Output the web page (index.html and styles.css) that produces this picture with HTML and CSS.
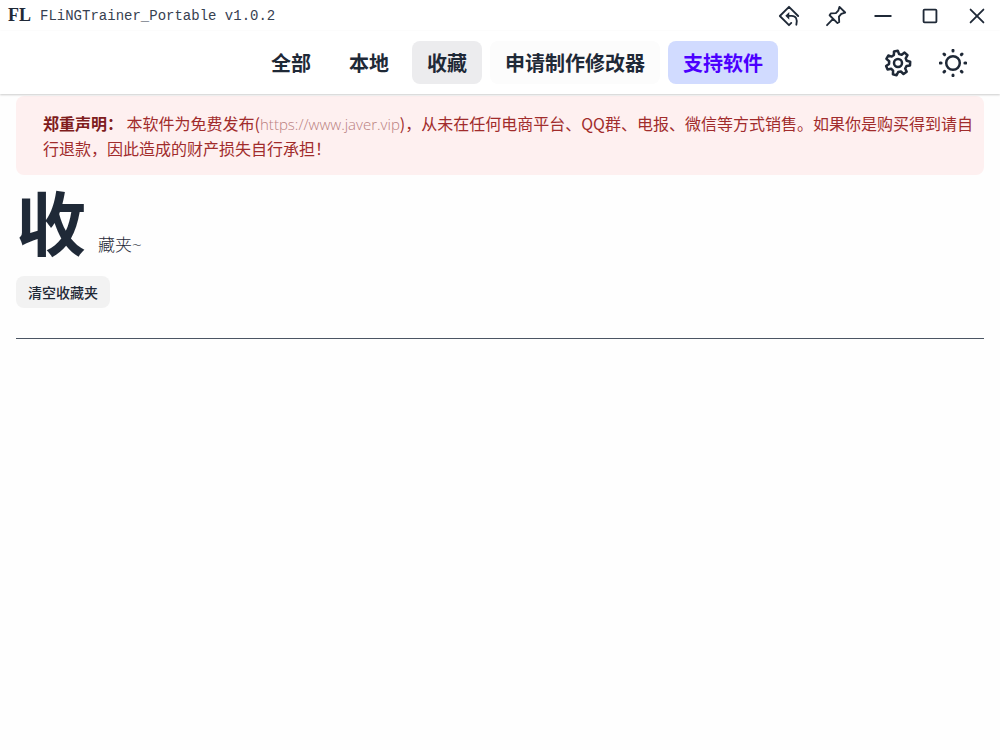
FILE: index.html
```html
<!DOCTYPE html>
<html lang="zh-CN">
<head>
    <meta charset="UTF-8">
    <title>FLiNGTrainer_Portable</title>
    <link rel="stylesheet" href="styles.css">
</head>
<body>
    <header class="titlebar">
        <span class="logo">FL</span>
        <span class="app-name">FLiNGTrainer_Portable v1.0.2</span>
        <div class="window-buttons">
            <button type="button" aria-label="返回">
                <svg viewBox="0 0 24 24"><path d="M22 12 12 2 2 12l10 10 2.500-2.500M11 11.800h4c4.500 0 6.500 3.500 5 9.700"/><path class="fill" d="M12.300 7.500v8.600L8 11.800z"/></svg>
            </button>
            <button type="button" aria-label="置顶">
                <svg viewBox="0 0 24 24"><path d="M15.800 2 22 8.200l-4.200 1.500-2.600 3 .3 5.800-1.900 1.200L5 11.200l1.300-2 5.600-.3 2.600-2.700zM8.500 15.500 2.200 22"/></svg>
            </button>
            <button type="button" aria-label="最小化">
                <svg viewBox="0 0 24 24"><path d="M3.500 12h17"/></svg>
            </button>
            <button type="button" aria-label="最大化">
                <svg viewBox="0 0 24 24"><rect x="5" y="5" width="14" height="14" rx="1"/></svg>
            </button>
            <button type="button" aria-label="关闭">
                <svg viewBox="0 0 24 24"><path d="m5 5 14 14M19 5 5 19"/></svg>
            </button>
        </div>
    </header>

    <div class="navbar">
        <nav class="menu">
            <button type="button">全部</button>
            <button type="button">本地</button>
            <button type="button" class="active">收藏</button>
            <button type="button" class="request">申请制作修改器</button>
            <button type="button" class="support">支持软件</button>
        </nav>
        <div class="tools">
            <button type="button" aria-label="设置">
                <svg viewBox="0 0 28 28"><path d="M9.900 6 10 2.400 13.800 1.700 15.100 5.100 17.700 5.800 20.600 3.600 23.500 6.200 21.700 9.300 22.700 11.800 26.200 12.700 26 16.500 22.500 17.100 21.200 19.500 22.700 22.700 19.500 25 16.900 22.500 14.200 23 12.600 26.200 8.900 25.200 9.100 21.600 7.100 19.800 3.600 20.500 2.100 17 5 14.900 5.200 12.200 2.400 9.900 4.300 6.500 7.700 7.600z"/><circle cx="14" cy="14" r="4"/></svg>
            </button>
            <button type="button" aria-label="主题">
                <svg viewBox="0 0 28 28"><circle cx="14" cy="14" r="6.800"/><path class="rays" d="M14 1.300v.8M14 25.900v.8M1.300 14h.8M25.900 14h.8M5 5l.6.6M22.400 22.400l.6.6M5 23l.6-.6M22.400 5.600l.6-.6"/></svg>
            </button>
        </div>
    </div>

    <main>
        <p class="notice"><strong>郑重声明：</strong> 本软件为免费发布(<a href="https://www.javer.vip">https://www.javer.vip</a>)，从未在任何电商平台、QQ群、电报、微信等方式销售。如果你是购买得到请自行退款，因此造成的财产损失自行承担！</p>

        <h1><span class="big">收</span>藏夹~</h1>
        <button type="button" class="clear">清空收藏夹</button>
        <hr>
    </main>
</body>
</html>
```

FILE: styles.css
```css
* {
    box-sizing: border-box;
}
body {
    margin: 0;
    background-color: #fefefe;
    color: #1f2937;
    font-family: "Open Sans", "Noto Sans CJK SC", sans-serif;
    font-size: 16px;
}
button {
    border: none;
    padding: 0;
    background: none;
    color: inherit;
    font-family: inherit;
    cursor: pointer;
}
svg {
    display: block;
    width: 100%;
    height: 100%;
    fill: none;
    stroke: currentColor;
    stroke-width: 2;
    stroke-linejoin: round;
    stroke-linecap: round;
}
.fill {
    fill: currentColor;
    stroke: none;
}

/* title bar */
.titlebar {
    display: flex;
    align-items: center;
    height: 31px;
    padding: 0 12px 0 8px;
    background-color: #fff;
}
.logo {
    font-family: "Liberation Serif", serif;
    font-weight: bold;
    font-size: 18px;
    margin-right: 9px;
}
.app-name {
    color: #374151;
    font-family: "Liberation Mono", monospace;
    font-size: 14px;
}
.window-buttons {
    display: flex;
    gap: 25px;
    margin-left: auto;
}
.window-buttons button {
    width: 22px;
    height: 22px;
}

/* navigation */
.navbar {
    display: grid;
    grid-template-columns: 1fr auto 1fr;
    align-items: center;
    height: 63px;
    padding: 0 33px 0 67px;
    background-color: #fff;
    box-shadow: 0 1px 2px rgba(0, 0, 0, 0.2);
    position: relative;
}
.menu {
    display: flex;
    gap: 8px;
    grid-column: 2;
}
.menu button {
    height: 43px;
    padding: 0 15px;
    border-radius: 8px;
    font-size: 20px;
    font-weight: bold;
}
.menu .active {
    background-color: #ececee;
}
.menu .request {
    background-color: #fcfcfc;
}
.menu .support {
    background-color: #d1dbff;
    color: #4b00ff;
}
.tools {
    display: flex;
    gap: 27px;
    justify-content: flex-end;
}
.tools button {
    width: 28px;
    height: 28px;
}
.tools svg {
    stroke-width: 2.5;
}
.rays {
    stroke-width: 3;
}

/* content */
main {
    padding: 0 16px;
}
.notice {
    margin: 2px 0 0;
    padding: 15px 8px 15px 27px;
    border-radius: 8px;
    background-color: #fef0f0;
    color: #a12c2c;
    font-family: "Noto Sans CJK SC", sans-serif;
    line-height: 24px;
}
.notice strong {
    color: #7f1d1d;
}
.notice a {
    color: #b97e7e;
    font-family: "Open Sans", sans-serif;
    font-size: 15px;
    font-weight: 300;
    text-decoration: none;
}
h1 {
    margin: 6px 0 0;
    font-size: 17px;
    font-weight: 300;
    line-height: 24px;
}
.big {
    margin-right: 12px;
    font-size: 70px;
    font-weight: bold;
    line-height: 86px;
}
.clear {
    display: block;
    height: 32px;
    margin-top: 9px;
    padding: 0 12px;
    border-radius: 8px;
    background-color: #f2f2f2;
    font-size: 14px;
    font-weight: 500;
}
hr {
    margin: 30px 0 0;
    border: none;
    border-top: 1px solid #4b5563;
}
```
